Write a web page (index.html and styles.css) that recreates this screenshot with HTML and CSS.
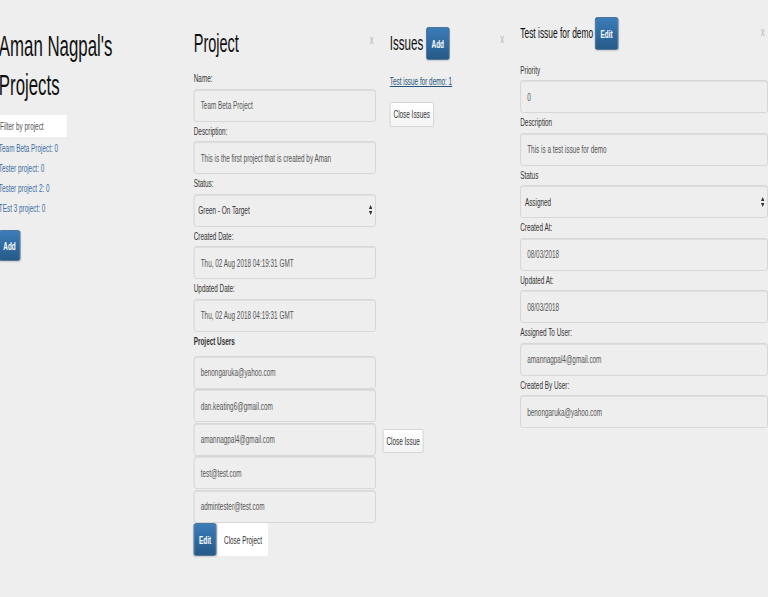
FILE: index.html
```html
<!DOCTYPE html>
<html lang="en">
<head>
<meta charset="utf-8">
<title>Projects</title>
<link rel="stylesheet" href="styles.css">
</head>
<body>
<div class="page">
  <section class="col col-projects">
    <h1 class="page-title">Aman Nagpal's Projects</h1>
    <input class="filter" type="text" placeholder="Filter by project">
    <ul class="project-list">
      <li><a href="#">Team Beta Project: 0</a></li>
      <li><a href="#">Tester project: 0</a></li>
      <li><a href="#">Tester project 2: 0</a></li>
      <li><a href="#">TEst 3 project: 0</a></li>
    </ul>
    <button class="btn btn-primary btn-add">Add</button>
  </section>

  <section class="col col-project">
    <div class="col-head">
      <h2 class="head-title head-project">Project</h2>
      <span class="close-x">x</span>
    </div>
    <div class="field"><label>Name:</label><div class="control">Team Beta Project</div></div>
    <div class="field"><label>Description:</label><div class="control">This is the first project that is created by Aman</div></div>
    <div class="field"><label>Status:</label><div class="control select"><span>Green - On Target</span><svg class="arrows" width="6" height="10" viewBox="0 0 6 10"><path d="M0 4 L3 0 L6 4 Z M0 6 L3 10 L6 6 Z" fill="#333"/></svg></div></div>
    <div class="field"><label>Created Date:</label><div class="control">Thu, 02 Aug 2018 04:19:31 GMT</div></div>
    <div class="field"><label>Updated Date:</label><div class="control">Thu, 02 Aug 2018 04:19:31 GMT</div></div>
    <div class="users-title">Project Users</div>
    <div class="users">
      <div class="control">benongaruka@yahoo.com</div>
      <div class="control">dan.keating6@gmail.com</div>
      <div class="control">amannagpal4@gmail.com</div>
      <div class="control">test@test.com</div>
      <div class="control">admintester@test.com</div>
    </div>
    <div class="actions">
      <button class="btn btn-primary btn-edit">Edit</button>
      <button class="btn btn-plain">Close Project</button>
    </div>
  </section>

  <section class="col col-issues">
    <div class="col-head">
      <div class="head-group">
        <h2 class="head-title head-issues">Issues</h2>
        <button class="btn btn-primary btn-head">Add</button>
      </div>
      <span class="close-x">x</span>
    </div>
    <a class="issue-link" href="#">Test issue for demo: 1</a>
    <button class="btn btn-default btn-close-issues">Close Issues</button>
    <button class="btn btn-default btn-close-issue">Close Issue</button>
  </section>

  <section class="col col-issue">
    <div class="col-head">
      <div class="head-group">
        <h2 class="head-title head-issue">Test issue for demo</h2>
        <button class="btn btn-primary btn-head btn-head-edit">Edit</button>
      </div>
      <span class="close-x close-x-issue">x</span>
    </div>
    <div class="field"><label>Priority</label><div class="control">0</div></div>
    <div class="field"><label>Description</label><div class="control">This is a test issue for demo</div></div>
    <div class="field"><label>Status</label><div class="control select"><span>Assigned</span><svg class="arrows" width="6" height="10" viewBox="0 0 6 10"><path d="M0 4 L3 0 L6 4 Z M0 6 L3 10 L6 6 Z" fill="#333"/></svg></div></div>
    <div class="field"><label>Created At:</label><div class="control">08/03/2018</div></div>
    <div class="field"><label>Updated At:</label><div class="control">08/03/2018</div></div>
    <div class="field"><label>Assigned To User:</label><div class="control">amannagpal4@gmail.com</div></div>
    <div class="field"><label>Created By User:</label><div class="control">benongaruka@yahoo.com</div></div>
  </section>
</div>
</body>
</html>
```

FILE: styles.css
```css
html, body {
  margin: 0;
  padding: 0;
  background: #eeeeee;
  overflow: hidden;
}

body {
  font-family: "Liberation Sans", Arial, sans-serif;
  color: #333;
  font-size: 11px;
}

.page {
  width: 1324px;
  height: 597px;
  display: grid;
  grid-template-columns: 310px 314px 201px 427px;
  column-gap: 24px;
  transform: scaleX(0.58);
  transform-origin: 0 0;
}

.col {
  display: flex;
  flex-direction: column;
  align-items: stretch;
  min-width: 0;
}

/* column 1 */
.col-projects {
  padding-top: 27px;
  margin-left: -2px;
  align-items: flex-start;
}

.page-title {
  margin: 0;
  font-size: 29px;
  line-height: 39px;
  font-weight: normal;
  color: #111;
  width: 240px;
}

.filter {
  margin-top: 10px;
  width: 117px;
  height: 22px;
  box-sizing: border-box;
  border: none;
  background: #fff;
  padding: 0 0 0 2px;
  font-family: inherit;
  font-size: 11px;
  color: #555;
  outline: none;
}

.filter::placeholder {
  color: #555;
}

.project-list {
  list-style: none;
  margin: 1px 0 0;
  padding: 0;
}

.project-list li {
  line-height: 20px;
  font-size: 11px;
}

.project-list a {
  color: #3a6fa5;
  text-decoration: none;
}

/* buttons */
.btn {
  font-family: inherit;
  font-size: 11px;
  box-sizing: border-box;
  margin: 0;
  border-radius: 3px;
  cursor: pointer;
}

.btn-primary {
  color: #fff;
  font-weight: bold;
  background: linear-gradient(to bottom, #3b7cba 0, #265a88 100%);
  border: 1px solid #245580;
  box-shadow: 0 1px 2px rgba(0,0,0,0.15);
}

.btn-add {
  margin-top: 12px;
  width: 37px;
  height: 31px;
  padding: 0;
}

.btn-plain {
  background: #fff;
  border: none;
  color: #333;
  height: 33px;
  width: 86px;
  padding: 0;
}

.btn-default {
  background: linear-gradient(to bottom, #ffffff 0, #f4f4f4 100%);
  border: 1px solid #cfcfcf;
  color: #333;
  padding: 0;
  align-self: flex-start;
  border-radius: 2px;
}

/* column heads */
.col-head {
  display: flex;
  justify-content: space-between;
  align-items: flex-start;
}

.head-group {
  display: flex;
  align-items: center;
  gap: 5px;
}

.head-title {
  margin: 0;
  font-weight: normal;
  color: #111;
}

.head-project {
  font-size: 25px;
  line-height: 30px;
}

.head-issues {
  font-size: 20px;
  line-height: 33px;
}

.head-issue {
  font-size: 14.5px;
  line-height: 33px;
}

.btn-head {
  width: 40px;
  height: 33px;
  padding: 0;
}

.btn-head-edit {
  margin-left: -2px;
}

.close-x {
  color: #b5b5b5;
  font-size: 13px;
  line-height: 15px;
  margin-top: 4px;
  margin-right: 4px;
}

.close-x-issue {
  margin-top: 7px;
  margin-right: 6px;
}

/* column 2 */
.col-project {
  padding-top: 28.4px;
}

.col-project .col-head {
  margin-bottom: 11px;
}

.field label {
  display: block;
  font-size: 11px;
  line-height: 19.5px;
  color: #333;
}

.control {
  box-sizing: border-box;
  height: 33px;
  background: #eeeeee;
  border: 1px solid #d0d0d0;
  border-radius: 4px;
  box-shadow: inset 0 1px 1px rgba(0,0,0,0.075);
  padding: 0 11px;
  font-size: 11px;
  color: #555;
  display: flex;
  align-items: center;
  white-space: nowrap;
  overflow: hidden;
}

.control.select {
  justify-content: space-between;
  padding: 0 5px 0 7px;
  color: #333;
}

.arrows {
  flex: none;
}

.users-title {
  font-weight: bold;
  font-size: 11px;
  line-height: 19.5px;
  margin-bottom: 4.6px;
}

.users .control {
  margin-bottom: 0.5px;
}

.actions {
  display: flex;
  gap: 3px;
}

.btn-edit {
  width: 39px;
  height: 33px;
  padding: 0;
}

/* column 3 */
.col-issues {
  padding-top: 27.3px;
}

.issue-link {
  margin-top: 10.5px;
  line-height: 20px;
  color: #23527c;
  text-decoration: underline;
  font-size: 11px;
  align-self: flex-start;
}

.btn-close-issues {
  margin-top: 11.2px;
  width: 76px;
  height: 25px;
}

.btn-close-issue {
  margin-top: 301.6px;
  margin-left: -12px;
  width: 70px;
  height: 24px;
}

/* column 4 */
.col-issue {
  padding-top: 17px;
}

.col-issue .col-head {
  margin-bottom: 10.5px;
}
```
